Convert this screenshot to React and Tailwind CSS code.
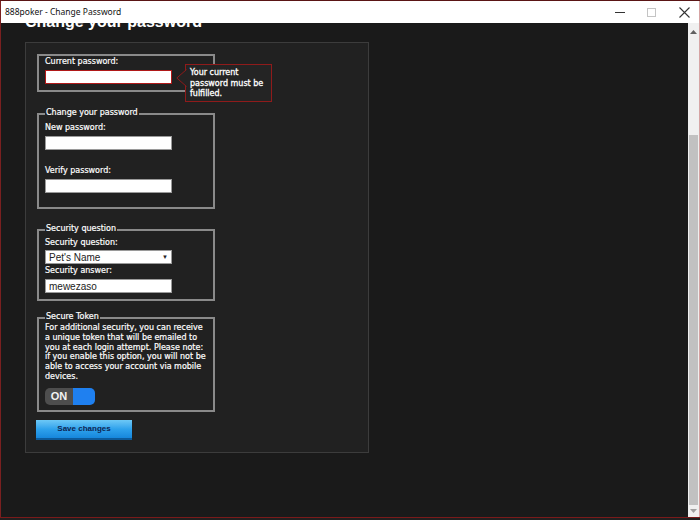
const body = { fontFamily: '"DejaVu Sans", Verdana, sans-serif' };

const Box = ({ legend, className = '', children }) => (
  <div className={`relative ml-[11px] w-[178px] border-2 border-[#8a8a8a] ${className}`}>
    {legend && (
      <span className="absolute left-[6px] top-[-7px] bg-[#212121] px-px text-[8px] leading-[10px] text-white [-webkit-text-stroke:0.2px_#fff]">
        {legend}
      </span>
    )}
    {children}
  </div>
);

const Label = ({ children, className = '' }) => (
  <div className={`h-[10px] text-[8px] leading-[10px] text-white [-webkit-text-stroke:0.2px_#fff] ${className}`}>
    {children}
  </div>
);

const Field = ({ value = '', error = false, className = '' }) => (
  <div
    className={`flex h-[14px] w-[127px] items-center bg-white pl-[3px] text-[10px] text-[#222] ${
      error ? 'border-[1.5px] border-[#b01818]' : 'border border-[#9a9a9a]'
    } ${className}`}
    style={{ fontFamily: '"Liberation Sans", Arial, sans-serif' }}
  >
    {value}
  </div>
);

export default function App() {
  return (
    <div className="flex h-[520px] w-[700px] flex-col overflow-hidden bg-[#2a0b0b]" style={body}>
      <div className="h-px bg-[#5a1515]" />
      <div className="flex flex-1 flex-col border-l border-r border-l-[#7a2020] border-r-[#d6a3a3]">
        {/* title bar */}
        <div className="relative z-10 flex h-[22px] items-center bg-white pl-[4px]">
          <span
            className="text-[8.5px] text-[#111]"
            style={{ fontFamily: '"Noto Sans", "Open Sans", sans-serif' }}
          >
            888poker - Change Password
          </span>
          <div className="ml-auto flex items-center">
            <div className="h-px w-[10px] bg-[#333]" />
            <div className="ml-[22px] h-[9px] w-[9px] border border-[#c4c4c4]" />
            <svg className="ml-[23px] mr-[9px]" width="11" height="11" viewBox="0 0 11 11">
              <path d="M0.5 0.5 L10.5 10.5 M10.5 0.5 L0.5 10.5" stroke="#333" strokeWidth="1.1" fill="none" />
            </svg>
          </div>
        </div>

        <div className="flex flex-1">
          {/* content */}
          <div className="flex-1 overflow-hidden bg-[#1a1a1a]">
            <h1
              className="ml-[24px] mt-[-9px] h-[16px] text-[16px] font-bold leading-[16px] text-white"
              style={{ fontFamily: '"Liberation Sans", Arial, sans-serif' }}
            >
              Change your password
            </h1>

            <div className="ml-[24px] mt-[12px] w-[344px] border border-[#3c3c3c] bg-[#212121] pb-[12px] pt-[11px]">
              {/* current password */}
              <Box className="px-[6px] pb-[6px] pt-px">
                <Label>Current password:</Label>
                <Field error className="mt-[3px]" />
                {/* validation tooltip */}
                <div className="absolute left-[146px] top-[8px] z-10 h-[38px] w-[87px]">
                  <svg className="absolute left-[-9px] top-[5px]" width="11" height="18" viewBox="0 0 11 18">
                    <path d="M10.5 0.5 L0.8 9 L10.5 17.5" fill="#242424" stroke="#8f1b1b" strokeWidth="1" />
                  </svg>
                  <div className="h-full w-full border border-[#8f1b1b] bg-[#242424] pl-[4px] pt-[3px] text-[8px] leading-[10.5px] text-white [-webkit-text-stroke:0.3px_#fff]">
                    Your current
                    <br />
                    password must be
                    <br />
                    fulfilled.
                  </div>
                </div>
              </Box>

              {/* change password */}
              <Box legend="Change your password" className="mt-[21px] px-[6px] pb-[14px] pt-[8px]">
                <Label>New password:</Label>
                <Field className="mt-[3px]" />
                <Label className="mt-[16px]">Verify password:</Label>
                <Field className="mt-[3px]" />
              </Box>

              {/* security question */}
              <Box legend="Security question" className="mt-[20px] px-[6px] pb-[6px] pt-[7px]">
                <Label>Security question:</Label>
                <div
                  className="mt-[2px] flex h-[14px] w-[127px] items-center justify-between border border-[#9a9a9a] bg-white pl-[3px] pr-[3px] text-[10px] text-[#222]"
                  style={{ fontFamily: '"Liberation Sans", Arial, sans-serif' }}
                >
                  <span>Pet's Name</span>
                  <span className="text-[6px] text-[#222]">▼</span>
                </div>
                <Label className="mt-[2px]">Security answer:</Label>
                <Field value="mewezaso" className="mt-[3px]" />
              </Box>

              {/* secure token */}
              <Box legend="Secure Token" className="mt-[16px] px-[6px] pb-[5px] pt-[4px]">
                <p className="whitespace-nowrap text-[8px] leading-[9.8px] text-white [-webkit-text-stroke:0.2px_#fff]">
                  For additional security, you can receive
                  <br />
                  a unique token that will be emailed to
                  <br />
                  you at each login attempt. Please note:
                  <br />
                  if you enable this option, you will not be
                  <br />
                  able to access your account via mobile
                  <br />
                  devices.
                </p>
                <div className="mt-[6px] flex h-[17px] w-[50px] overflow-hidden rounded-[5px]">
                  <div
                    className="flex w-[28px] items-center justify-center bg-[#4e4e4e] text-[11px] font-bold text-[#f2f2f2]"
                    style={{ fontFamily: '"Liberation Sans", Arial, sans-serif' }}
                  >
                    ON
                  </div>
                  <div className="flex-1 bg-[#1f80f0]" />
                </div>
              </Box>

              <button
                className="ml-[10px] mt-[8px] flex h-[20px] w-[96px] items-center justify-center border-b-2 border-[#0c5a9a] bg-gradient-to-b from-[#6cc8f6] via-[#2ea2ec] to-[#1687dc] text-[8px] font-bold text-[#0d2552]"
                style={{ fontFamily: '"Liberation Sans", Arial, sans-serif' }}
              >
                Save changes
              </button>
            </div>
          </div>

          {/* scrollbar */}
          <div className="flex w-[11px] flex-col bg-[#f0f0f0]">
            <div className="flex h-[17px] items-center justify-center">
              <svg width="7" height="4" viewBox="0 0 7 4">
                <path d="M0 4 L3.5 0 L7 4 Z" fill="#606060" />
              </svg>
            </div>
            <div className="h-[95px]" />
            <div className="mx-px h-[370px] bg-[#c1c1c1]" />
            <div className="flex flex-1 items-center justify-center">
              <svg width="7" height="4" viewBox="0 0 7 4">
                <path d="M0 0 L7 0 L3.5 4 Z" fill="#a0a0a0" />
              </svg>
            </div>
          </div>
        </div>
      </div>
      <div className="h-[3px] border-t border-[#7a1a1a] bg-[#202020]" />
    </div>
  );
}
